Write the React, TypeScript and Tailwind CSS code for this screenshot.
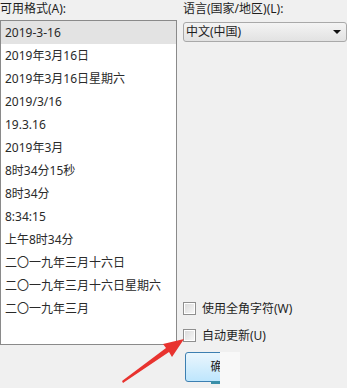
import React from "react";

const items = [
  "2019-3-16",
  "2019年3月16日",
  "2019年3月16日星期六",
  "2019/3/16",
  "19.3.16",
  "2019年3月",
  "8时34分15秒",
  "8时34分",
  "8:34:15",
  "上午8时34分",
  "二〇一九年三月十六日",
  "二〇一九年三月十六日星期六",
  "二〇一九年三月",
];

const font = { fontFamily: '"Noto Sans","Noto Sans CJK SC",sans-serif' };

function Checkbox({ label }: { label: string }) {
  return (
    <div className="flex h-[27px] items-center">
      <div className="flex h-[13px] w-[13px] items-center justify-center border border-[#8f8f8f] bg-white">
        <div className="h-[9px] w-[9px] bg-gradient-to-br from-[#dcdcdc] to-[#f6f6f6]" />
      </div>
      <span className="ml-[6px] text-[12px] leading-[18px] text-[#1e1e1e]">{label}</span>
    </div>
  );
}

export default function App() {
  return (
    <div
      className="relative h-[388px] w-[347px] overflow-hidden bg-[#f0f0f0]"
      style={font}
    >
      <div className="flex h-full">
        <div className="flex w-[177px] flex-col">
          <div className="h-[20px] text-[12px] leading-[18px] text-[#1e1e1e]">可用格式(A):</div>
          <div className="h-[325px] border border-[#8a8a8a] bg-white">
            {items.map((t, i) => (
              <div
                key={t}
                className={
                  "flex h-[23px] items-center pl-[4px] text-[12px] text-[#2a2a2a] " +
                  (i === 0 ? "bg-[#e3e3e3]" : "")
                }
              >
                {t}
              </div>
            ))}
          </div>
        </div>
        <div className="ml-[6px] flex flex-1 flex-col">
          <div className="h-[22px] text-[12px] leading-[18px] text-[#1e1e1e]">语言(国家/地区)(L):</div>
          <div className="flex h-[20px] items-center justify-between rounded-[3px] border border-[#a9a9a9] bg-gradient-to-b from-[#f4f4f4] to-[#e2e2e2] pl-[2px] pr-[5px]">
            <span className="text-[12px] leading-[16px] text-[#1e1e1e]">中文(中国)</span>
            <svg width="8" height="4" viewBox="0 0 8 4">
              <polygon points="0,0 8,0 4,4" fill="#111" />
            </svg>
          </div>
          <div className="mt-[253px]">
            <Checkbox label="使用全角字符(W)" />
            <Checkbox label="自动更新(U)" />
          </div>
          <div className="mt-[3px] flex h-[36px]">
            <div className="relative ml-[2px] h-[33px] w-[35px] overflow-hidden">
              <div className="flex h-[30px] w-[75px] items-center justify-center rounded-[3px] border border-[#3c7fb1] bg-gradient-to-b from-[#eaf6fd] to-[#bee6fd] text-[12px] text-[#1e1e1e]">
                确定
              </div>
              <div className="absolute bottom-[1px] right-0 h-[3px] w-[9px] bg-[#3a8fa8]" />
            </div>
            <div className="h-full w-[20px] bg-[#f8f8f8]" />
          </div>
        </div>
      </div>
      <svg className="pointer-events-none absolute left-0 top-0" width="347" height="388" viewBox="0 0 347 388">
        <polygon
          points="122,381 166,348 163,344 184,339 172,357 169,352 123,383"
          fill="#e8332f"
        />
      </svg>
    </div>
  );
}
